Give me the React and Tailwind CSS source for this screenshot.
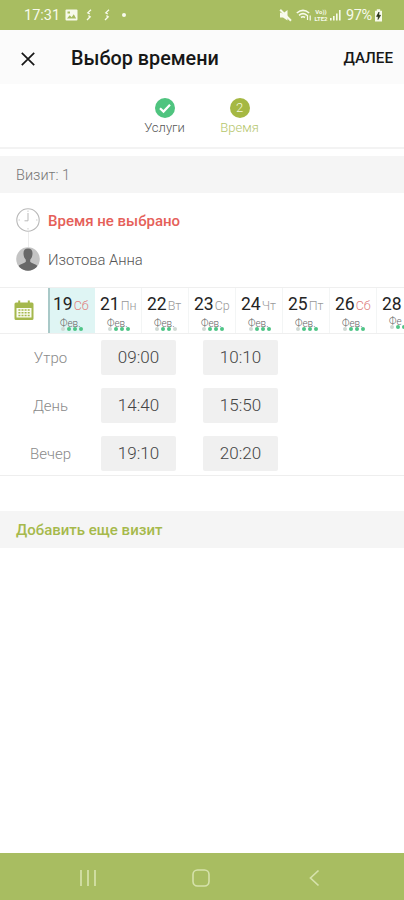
import React from "react";

const days = [
  { num: "19", name: "Сб", active: true, weekend: true },
  { num: "21", name: "Пн" },
  { num: "22", name: "Вт", free: 2 },
  { num: "23", name: "Ср" },
  { num: "24", name: "Чт" },
  { num: "25", name: "Пт" },
  { num: "26", name: "Сб", weekend: true },
  { num: "28", name: "" },
];

const slots = [
  { label: "Утро", times: ["09:00", "10:10"] },
  { label: "День", times: ["14:40", "15:50"] },
  { label: "Вечер", times: ["19:10", "20:20"] },
];

const StatusBar = () => {
  return (
    <div className="h-[30px] shrink-0 bg-[#a8bd61] text-[#f7faec] flex items-center pl-6 pr-[21px]">
      <span className="w-[35px] pt-[2px] text-[14.5px] leading-none whitespace-nowrap">17:31</span>
      <svg className="ml-[6px]" width="13" height="12" viewBox="0 0 13 12">
        <rect x="0.5" y="0.5" width="12" height="11" rx="1" fill="currentColor" />
        <path d="M2 9.5 L4.7 6.3 L6.6 8.2 L8.8 5.2 L11.2 9.5 Z" fill="#a8bd61" />
        <rect x="2.5" y="2.5" width="2.5" height="2" fill="#a8bd61" />
      </svg>
      <svg className="ml-[8px]" width="6" height="12" viewBox="0 0 6 12" fill="none" stroke="currentColor" strokeWidth="1.3">
        <path d="M5 0.8 L1.8 3.8 L3.8 5 M2.4 6.6 L4.2 7.8 L1 11" />
      </svg>
      <svg className="ml-[12px]" width="6" height="12" viewBox="0 0 6 12" fill="none" stroke="currentColor" strokeWidth="1.3">
        <path d="M5 0.8 L1.8 3.8 L3.8 5 M2.4 6.6 L4.2 7.8 L1 11" />
      </svg>
      <span className="ml-[12px] h-1 w-1 rounded-full bg-[#f7faec]"></span>

      <svg className="ml-auto" width="13" height="13" viewBox="0 0 13 13">
        <path d="M1 3.5 L4 4.5 L8.5 1 V11.5 L4 8.5 H1 Z" fill="currentColor" />
        <path d="M1.2 0.8 L12 11.8" stroke="currentColor" strokeWidth="2" />
      </svg>
      <svg className="ml-[4px]" width="16" height="12" viewBox="0 0 16 12" fill="none" stroke="currentColor" strokeWidth="1.6">
        <path d="M0.8 4 Q7 -1.2 13.2 4 M3 6.3 Q7 3 11 6.3 M5 8.5 Q7 7 9 8.5" />
        <path d="M11.5 11 V6 M14.2 6.5 V11.5" strokeWidth="1.2" />
      </svg>
      <div className="ml-[1px] w-[16px] flex flex-col items-center text-[6px] font-bold leading-[7px] whitespace-nowrap">
        <span>Vo))</span>
        <span>LTE2</span>
      </div>
      <svg className="ml-[1px]" width="11" height="12" viewBox="0 0 11 12" fill="currentColor">
        <path d="M0 9h1.6v2.5H0zM3 7h1.6v4.5H3zM6 4.5h1.6v7H6zM9 1h1.6v10.5H9z" />
      </svg>
      <span className="ml-[5px] w-[27px] pt-[2px] text-[14.5px] leading-none tracking-[-0.4px] whitespace-nowrap">97%</span>
      <svg className="ml-[1px]" width="9" height="13" viewBox="0 0 9 13">
        <path d="M2.8 0.3h3.4v1.5H8v10.8H1V1.8h1.8z" fill="currentColor" />
        <path d="M5 3 L2.5 7.4 H4.3 L4 10.5 L6.6 6.3 H4.8 Z" fill="#222b10" stroke="#222b10" strokeWidth="0.6" />
      </svg>
    </div>
  );
};

const Header = () => {
  return (
    <header className="h-[54px] shrink-0 bg-[#fbfbfb] text-[#171717] flex items-center pl-[21px] pr-[11px] pt-[3px]">
      <svg width="14" height="14" viewBox="0 0 14 14" fill="none" stroke="currentColor" strokeWidth="1.7">
        <path d="M0.8 0.8 L13.2 13.2 M13.2 0.8 L0.8 13.2" />
      </svg>
      <h1 className="ml-[36px] pt-px text-[19.8px] font-medium whitespace-nowrap">Выбор времени</h1>
      <button className="ml-auto text-[15.2px] font-medium whitespace-nowrap">ДАЛЕЕ</button>
    </header>
  );
};

const Steps = () => {
  return (
    <div className="h-[65px] shrink-0 flex justify-center pt-[14px] border-b-2 border-[#f3f3f3]">
      <div className="w-[75px] flex flex-col items-center">
        <svg width="20" height="20" viewBox="0 0 20 20">
          <circle cx="10" cy="10" r="10" fill="#4fc47f" />
          <path d="M5 10.2 L8.5 13.6 L15 6.8" fill="none" stroke="#fff" strokeWidth="2.2" />
        </svg>
        <p className="mt-[1px] text-[13px] font-light leading-[17px] text-[#555]">Услуги</p>
      </div>
      <div className="w-[75px] flex flex-col items-center">
        <span className="h-5 w-5 rounded-full bg-[#a5b843] text-[#f4f8df] text-[13px] font-light leading-5 text-center">2</span>
        <p className="mt-[1px] text-[13px] font-light leading-[17px] text-[#b5c66c]">Время</p>
      </div>
    </div>
  );
};

const VisitInfo = () => {
  return (
    <div className="h-[94px] flex flex-col pl-4 pt-[15px]">
      <div className="flex items-center h-6">
        <svg width="24" height="24" viewBox="0 0 24 24" fill="none" stroke="#b9b9b9">
          <circle cx="12" cy="12" r="11.2" strokeWidth="1.1" />
          <path d="M12 5 V12.8 H8.5" strokeWidth="1" />
          <path d="M12 2.5v1.5M12 20v1.5M2.5 12H4M20 12h1.5" strokeWidth="0.7" />
        </svg>
        <p className="ml-[8px] pt-[3px] text-[15px] font-medium text-[#e56059] whitespace-nowrap">Время не выбрано</p>
      </div>
      <div className="ml-[12px] h-[15px] w-px bg-[#ececec]"></div>
      <div className="flex items-center h-6">
        <svg width="24" height="24" viewBox="0 0 24 24">
          <defs>
            <clipPath id="avatar">
              <circle cx="12" cy="12" r="11.8" />
            </clipPath>
          </defs>
          <g clipPath="url(#avatar)">
            <rect width="24" height="24" fill="#c4c4c4" />
            <path d="M12 1.5c-3.4 0-4.7 2.3-4.5 5.2.2 3.2 1 4.5 2.3 6v2.1C7.8 16.8 3.5 16.8 2 20v4h20v-4c-1.5-3.2-5.8-3.2-7.8-5.2v-2.1c1.3-1.5 2.1-2.8 2.3-6 .2-2.9-1.1-5.2-4.5-5.2z" fill="#686868" />
          </g>
        </svg>
        <p className="ml-[8px] pt-[3px] text-[14.8px] font-light text-[#555] whitespace-nowrap">Изотова Анна</p>
      </div>
    </div>
  );
};

const DayCell = ({ day }) => {
  const free = day.free || 3;
  return (
    <div
      className={
        day.active
          ? "w-[47px] shrink-0 bg-[#dff5f4] border-l-2 border-[#a9c9c8] pt-[5px] pl-[3px]"
          : "w-[47px] shrink-0 border-r border-[#f3f5f5] pt-[5px] pl-[5px]"
      }
    >
      <div className="flex items-baseline gap-px leading-[22px] whitespace-nowrap">
        <span className="text-[17.5px] text-[#242424]">{day.num}</span>
        <span className={day.weekend ? "text-[12.5px] font-light text-[#e08080]" : "text-[12.5px] font-light text-[#999]"}>
          {day.name}
        </span>
      </div>
      <div className={day.name ? "relative mt-px h-[14px] pl-[7px]" : "relative mt-px h-[14px] w-[22px] pl-[7px] overflow-hidden"}>
        <p className="text-[10px] leading-[11px] font-light text-[#666]">{day.name ? "Фев." : "Фе"}</p>
        <div className="absolute left-[8px] top-[9px] flex gap-[2px]">
          {[0, 1, 2, 3].map((i) => (
            <span
              key={i}
              className={
                i > 0 && i <= free
                  ? "h-[4px] w-[4px] shrink-0 rounded-full bg-[#4fc486]"
                  : "h-[4px] w-[4px] shrink-0 rounded-full bg-[#cfd8d3]"
              }
            ></span>
          ))}
        </div>
      </div>
    </div>
  );
};

const DayStrip = () => {
  return (
    <div className="h-[47px] flex overflow-hidden border-y border-[#efefef]">
      <div className="w-12 shrink-0 flex items-center justify-center">
        <svg width="20" height="21" viewBox="0 0 20 21">
          <path d="M2 2.5h2.2V0.5h2v2h7.6v-2h2v2H18q1.5 0 1.5 1.5v14.5q0 1.5-1.5 1.5H2q-1.5 0-1.5-1.5V4q0-1.5 1.5-1.5z" fill="#a5b84c" />
          <rect x="2.5" y="8" width="15" height="9.5" fill="#fbfcf3" />
          <path
            d="M4.4 9.3h2v1.5h-2zM7.5 9.3h2v1.5h-2zM10.6 9.3h2v1.5h-2zM13.7 9.3h2v1.5h-2zM4.4 12h2v1.5h-2zM7.5 12h2v1.5h-2zM10.6 12h2v1.5h-2zM13.7 12h2v1.5h-2zM4.4 14.7h2v1.5h-2zM7.5 14.7h2v1.5h-2zM10.6 14.7h2v1.5h-2zM13.7 14.7h2v1.5h-2z"
            fill="#a5b84c"
          />
        </svg>
      </div>
      {days.map((day) => (
        <DayCell key={day.num} day={day} />
      ))}
    </div>
  );
};

const Slots = () => {
  return (
    <div className="h-[142px] flex flex-col gap-[13px] pt-[6px] border-b border-[#eeeeee]">
      {slots.map((row) => (
        <div key={row.label} className="flex h-[35px] shrink-0 items-center">
          <p className="w-[101px] pt-[2px] text-center text-[15px] font-light text-[#8a8a8a]">{row.label}</p>
          <div className="flex gap-[27px]">
            {row.times.map((time) => (
              <button key={time} className="h-[35px] w-[75px] pt-px rounded-[2px] bg-[#f0f0f0] text-[17px] font-light text-[#444]">
                {time}
              </button>
            ))}
          </div>
        </div>
      ))}
    </div>
  );
};

const NavBar = () => {
  return (
    <div className="mt-auto h-[47px] shrink-0 bg-[#a8bd61] flex items-center pl-[79px] pt-[3px]">
      <svg width="18" height="18" viewBox="0 0 18 18" stroke="#d6e2ab" strokeWidth="1.7">
        <path d="M2 1 V17 M9 1 V17 M16 1 V17" />
      </svg>
      <svg className="ml-[95px]" width="18" height="18" viewBox="0 0 18 18" fill="none" stroke="#d6e2ab" strokeWidth="1.6">
        <rect x="1" y="1" width="16" height="16" rx="4.5" />
      </svg>
      <svg className="ml-[99px]" width="11" height="18" viewBox="0 0 11 18" fill="none" stroke="#d6e2ab" strokeWidth="1.7">
        <path d="M9.5 1.5 L1.5 9 L9.5 16.5" />
      </svg>
    </div>
  );
};

const App = () => {
  return (
    <div className="h-[900px] w-[404px] overflow-hidden bg-white flex flex-col font-['Roboto',sans-serif]">
      <StatusBar />
      <Header />
      <Steps />
      <div className="mt-[7px] h-[37px] shrink-0 bg-[#f5f5f5] pl-4 pt-[2px] flex items-center text-[14.5px] font-light text-[#777]">
        Визит: 1
      </div>
      <div className="shrink-0">
        <VisitInfo />
        <DayStrip />
        <Slots />
      </div>
      <div className="mt-[35px] h-[37px] shrink-0 bg-[#f5f5f5] pl-4 pt-[2px] flex items-center text-[15px] font-medium text-[#a6b94b]">
        Добавить еще визит
      </div>
      <NavBar />
    </div>
  );
};

export default App;
